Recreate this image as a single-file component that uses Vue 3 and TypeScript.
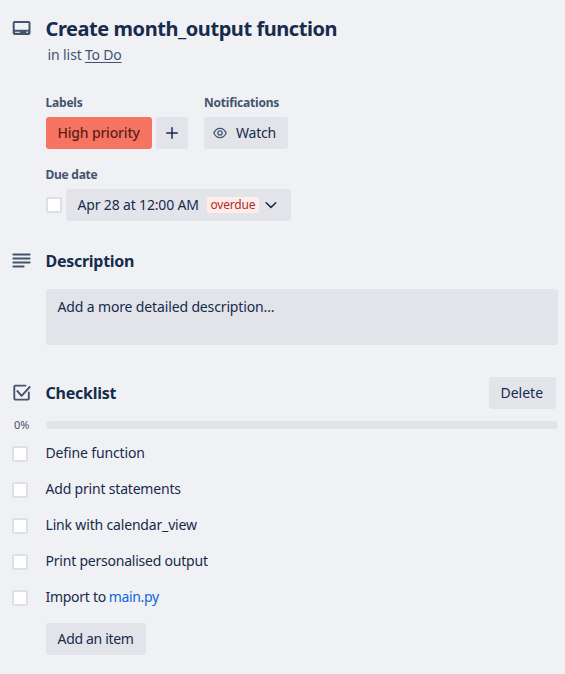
<script setup lang="ts">
interface CheckItem { text: string; link?: string; cls: string }

const items: CheckItem[] = [
  { text: 'Define function', cls: 't-define' },
  { text: 'Add print statements', cls: 't-print' },
  { text: 'Link with calendar_view', cls: 't-link' },
  { text: 'Print personalised output', cls: 't-pers' },
  { text: 'Import to ', link: 'main.py', cls: 't-import' },
]
</script>

<template>
  <main class="card">
    <header class="head">
      <svg class="icon" width="20" height="20" viewBox="0 0 20 20">
        <path fill-rule="evenodd" d="M2.700 3h13.800a2 2 0 0 1 2 2v10a2 2 0 0 1-2 2H2.700a2 2 0 0 1-2-2V5a2 2 0 0 1 2-2zM2.700 5v6.800h13.800V5zM3 13.700v1h5.200v-1zM14.300 13.500v1.500h1.500v-1.500z" />
      </svg>
      <h1><span class="t t-title">Create month_output function</span></h1>
      <p><span class="t t-in">in list</span><a class="t t-todo">To Do</a></p>
    </header>

    <div class="meta">
      <section>
        <h3><span class="t t-labels">Labels</span></h3>
        <div class="row">
          <button class="btn red"><span class="t t-high">High priority</span></button>
          <button class="btn plus">
            <svg class="strong" width="16" height="16" viewBox="0 0 16 16"><path d="M8 2.700v10.600M2.700 8h10.600" /></svg>
          </button>
        </div>
      </section>
      <section>
        <h3><span class="t t-notif">Notifications</span></h3>
        <button class="btn watch">
          <svg class="eye" width="16" height="16" viewBox="0 0 16 16"><path d="M1.800 8C3.200 5 5.300 3.300 8 3.300S12.800 5 14.200 8C12.800 11 10.700 12.700 8 12.700S3.200 11 1.800 8z" /><circle cx="8" cy="8" r="2.100" /></svg>
          <span class="t t-watch">Watch</span>
        </button>
      </section>
    </div>

    <section class="due">
      <h3><span class="t t-due">Due date</span></h3>
      <div class="row">
        <span class="box"></span>
        <button class="btn date">
          <span class="t t-date">Apr 28 at 12:00 AM</span>
          <span class="badge"><span class="t t-over">overdue</span></span>
          <svg class="strong" width="16" height="16" viewBox="0 0 16 16"><path d="M3.200 5.800L8 10.400l4.800-4.600" /></svg>
        </button>
      </div>
    </section>

    <section class="desc">
      <div class="section-head">
        <svg class="lines" width="20" height="20" viewBox="0 0 20 20"><path d="M1.300 3.500h16.400M1.300 7.500h16.400M1.300 11.500h16.400M1.300 15.500h10.400" /></svg>
        <h2><span class="t t-desc">Description</span></h2>
      </div>
      <div class="field"><span class="t t-add">Add a more detailed description…</span></div>
    </section>

    <section class="checklist">
      <div class="section-head">
        <svg class="check" width="20" height="20" viewBox="0 0 20 20"><path d="M13.500 2.600H3.300a1 1 0 0 0-1 1v12a1 1 0 0 0 1 1h12.500a1 1 0 0 0 1-1V9.500M5.300 8l4.300 4.800L17.700 4" /></svg>
        <h2><span class="t t-check">Checklist</span></h2>
        <button class="btn delete"><span class="t">Delete</span></button>
      </div>
      <div class="progress"><span class="pct">0%</span><div class="bar"></div></div>
      <ul>
        <li v-for="item in items" :key="item.text">
          <span class="box"></span>
          <span class="label"><span class="t" :class="item.cls">{{ item.text }}</span><a v-if="item.link" class="t t-main">{{ item.link }}</a></span>
        </li>
      </ul>
      <button class="btn add"><span class="t t-item">Add an item</span></button>
    </section>
  </main>
</template>

<style>
body { background: #f0f1f4; }
</style>
<style scoped>
.card { box-sizing: border-box; height: 674px; padding-top: 17px; background: #f0f1f4; color: #172b4d; font: 14px/20px "Noto Sans", sans-serif; }
h1, h2, h3, p, ul { margin: 0; padding: 0; }
.t { display: inline-block; white-space: pre; margin-left: -0.5px; }
.t-title { letter-spacing: -0.44px; }
.t-in { letter-spacing: -0.1px; margin-right: 3.7px; }
.t-todo { letter-spacing: -0.2px; }
.t-labels { letter-spacing: -0.2px; }
.t-high { letter-spacing: -0.19px; }
.t-notif { letter-spacing: -0.2px; margin-left: 0; }
.t-watch { letter-spacing: -0.2px; margin-left: 0; }
.t-due { letter-spacing: -0.26px; }
.t-date { letter-spacing: -0.16px; }
.t-over { letter-spacing: -0.17px; margin-left: 0; }
.t-desc { letter-spacing: -0.28px; }
.t-add { letter-spacing: -0.14px; }
.t-check { letter-spacing: -0.25px; }
.t-define { letter-spacing: -0.14px; }
.t-print { letter-spacing: -0.19px; }
.t-link { letter-spacing: -0.17px; }
.t-pers { letter-spacing: -0.22px; }
.t-import { letter-spacing: -0.28px; }
.t-main { letter-spacing: -0.36px; }
.t-item { letter-spacing: -0.32px; }
.head { display: grid; grid-template-columns: 34px 1fr; padding-left: 12px; }
h1 { font-size: 20px; line-height: 24px; font-weight: 700; }
.head p { grid-column: 2; padding: 4px 0 0 2px; color: #44546f; }
.meta { display: flex; gap: 16px; padding: 30px 0 0 46px; }
h3 { font-size: 12px; line-height: 16px; margin-bottom: 6px; color: #44546f; font-weight: 700; }
svg { display: block; flex: none; fill: none; stroke: #44546f; stroke-linecap: round; stroke-linejoin: round; }
svg.icon { margin-top: 1px; fill: #44546f; stroke: none; }
svg.strong { stroke: #172b4d; stroke-width: 1.5; }
svg.eye { stroke-width: 1.3; }
svg.lines { stroke-width: 1.8; }
svg.check { stroke-width: 1.9; }
.row { display: flex; gap: 4px; align-items: center; }
.btn { box-sizing: border-box; display: flex; align-items: center; height: 32px; padding: 0 12px; border: 0; border-radius: 3px; background: #e2e4e9; color: #172b4d; font: inherit; }
.red { width: 106px; background: #f87462; color: #5d1f1a; font-weight: 500; }
.plus { width: 32px; padding: 0 8px; }
.watch { width: 84px; padding: 0 8px; gap: 8px; }
.delete { width: 67px; }
.due { padding: 18px 0 0 46px; }
.box { box-sizing: border-box; width: 16px; height: 16px; border: 2px solid #dcdfe4; border-radius: 2px; background: #fff; flex: none; }
.date { width: 225px; }
.badge { width: 52px; height: 16px; margin: 0 4px 0 8px; background: #ffeceb; color: #ae2e24; font-size: 12px; line-height: 16px; border-radius: 2px; text-align: center; }
.desc { padding-top: 28px; }
.section-head { display: flex; align-items: center; gap: 14px; height: 24px; padding-left: 12px; }
h2 { font-size: 16px; line-height: 24px; flex: 1; }
.field { box-sizing: border-box; height: 56px; margin: 16px 7px 0 46px; padding: 8px 12px; background: #e2e4e9; border-radius: 3px; }
.checklist { padding-top: 32px; }
.checklist .section-head { height: 32px; padding-right: 9px; }
.progress { display: flex; align-items: center; height: 16px; margin: 8px 7px 0 12px; }
.pct { box-sizing: border-box; width: 34px; padding-left: 2px; font-size: 11px; color: #44546f; }
.bar { flex: 1; height: 8px; background: #e2e4e9; border-radius: 4px; }
ul { list-style: none; padding: 10px 0 0 12px; }
li { display: flex; height: 36px; gap: 18px; }
li .box { margin-top: 3px; }
.add { margin-left: 46px; }
a { color: #0c66e4; }
.head a { color: inherit; text-decoration: underline; text-underline-offset: 2px; }
</style>
